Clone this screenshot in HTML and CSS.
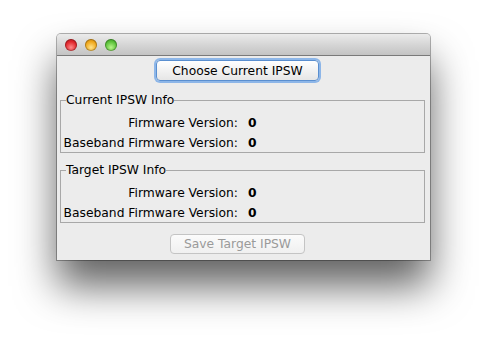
FILE: index.html
```html
<!DOCTYPE html>
<html>
<head>
<meta charset="utf-8">
<link rel="stylesheet" href="styles.css">
</head>
<body>
<div class="window">
  <div class="titlebar">
    <span class="light red"></span>
    <span class="light yellow"></span>
    <span class="light green"></span>
  </div>
  <div class="content">
    <div class="btn-row">
      <button class="btn focus">Choose Current IPSW</button>
    </div>
    <fieldset class="group">
      <legend>Current IPSW Info</legend>
      <div class="row"><span class="label">Firmware Version:</span><span class="value">0</span></div>
      <div class="row"><span class="label">Baseband Firmware Version:</span><span class="value">0</span></div>
    </fieldset>
    <fieldset class="group second">
      <legend>Target IPSW Info</legend>
      <div class="row"><span class="label">Firmware Version:</span><span class="value">0</span></div>
      <div class="row"><span class="label">Baseband Firmware Version:</span><span class="value">0</span></div>
    </fieldset>
    <div class="btn-row bottom">
      <button class="btn disabled">Save Target IPSW</button>
    </div>
  </div>
</div>
</body>
</html>
```

FILE: styles.css
```css
html, body {
  margin: 0;
  padding: 0;
  background: #ffffff;
}
body {
  font-family: "DejaVu Sans", sans-serif;
  font-size: 12.3px;
  color: #000;
  min-height: 339px;
  padding-top: 34px;
  box-sizing: border-box;
}
.window {
  margin: 0 0 0 57px;
  width: 373px;
  height: 226px;
  background: #ececec;
  border-radius: 4px 4px 0 0;
  box-shadow: 0 26px 40px rgba(0,0,0,0.62), 0 0 0 1px rgba(0,0,0,0.3);
  display: flex;
  flex-direction: column;
}
.titlebar {
  height: 21px;
  flex: none;
  background: linear-gradient(#ebebeb, #d2d2d2 60%, #c4c4c4);
  border-bottom: 1px solid #7a7a7a;
  border-radius: 4px 4px 0 0;
  display: flex;
  align-items: center;
  gap: 8px;
  padding-left: 8px;
}
.light {
  width: 12px;
  height: 12px;
  border-radius: 50%;
  box-shadow: inset 0 0 0 1px rgba(0,0,0,0.25);
}
.red { background: radial-gradient(circle at 50% 70%, #ff8a8a, #e0262c 55%, #a8141a); }
.yellow { background: radial-gradient(circle at 50% 70%, #ffe38a, #f0a81c 55%, #b8780a); }
.green { background: radial-gradient(circle at 50% 70%, #b8f58a, #5cc23a 55%, #2f8a1c); }
.content {
  display: flex;
  flex-direction: column;
  padding: 4px 5px 0 3px;
}
.btn-row {
  display: flex;
  justify-content: center;
  padding-right: 10px;
}
.btn {
  font-family: "DejaVu Sans", sans-serif;
  font-size: 12.3px;
  height: 21px;
  width: 163px;
  padding: 0;
  border-radius: 4px;
  background: linear-gradient(#ffffff, #f2f2f2 50%, #e6e6e6);
  border: 1px solid #9a9a9a;
  color: #000;
}
.btn.focus {
  border: 1px solid #5a8fd0;
  box-shadow: 0 0 0 2px #8db6e8;
}
.btn.disabled {
  color: #9a9a9a;
  border-color: #c4c4c4;
  background: linear-gradient(#fbfbfb, #f0f0f0);
  height: 20px;
  width: 135px;
}
.group {
  border: 1px solid #a8a8a8;
  margin: 12px 0 0 0;
  padding: 6px 0 0 2px;
  min-width: 0;
}
.group.second { margin-top: 10px; }
.group legend {
  padding: 0;
  margin-left: 3px;
  font-size: 12.3px;
}
.row {
  display: grid;
  grid-template-columns: 175px auto;
  column-gap: 10px;
  height: 20px;
  align-items: center;
}
.row:last-child { height: 19px; }
.label { text-align: right; }
.value { font-weight: bold; }
.bottom { margin-top: 11px; }
```
